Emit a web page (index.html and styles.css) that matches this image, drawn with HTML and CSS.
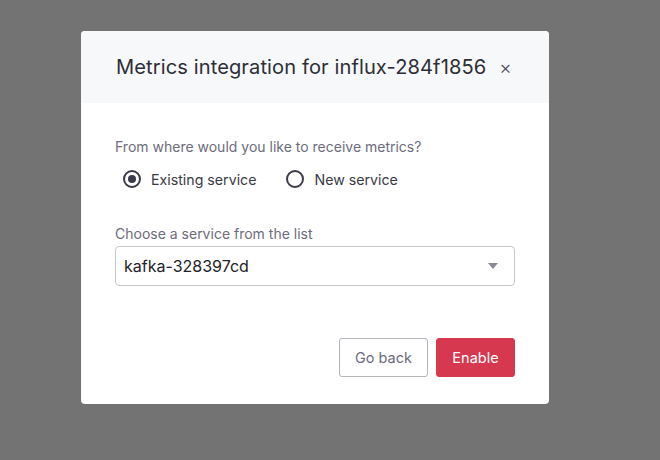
FILE: index.html
```html
<!DOCTYPE html>
<html lang="en">
<head>
<meta charset="utf-8">
<title>Metrics integration</title>
<link rel="stylesheet" href="styles.css">
</head>
<body>
<div class="modal">
  <div class="modal-header">
    <h2 class="modal-title">Metrics integration for influx-284f1856</h2>
    <span class="close">×</span>
  </div>
  <div class="modal-body">
    <p class="question">From where would you like to receive metrics?</p>
    <div class="radios">
      <label class="radio"><span class="radio-circle checked"></span>Existing service</label>
      <label class="radio"><span class="radio-circle"></span>New service</label>
    </div>
    <p class="field-label">Choose a service from the list</p>
    <div class="select">
      <span class="select-value">kafka-328397cd</span>
      <span class="caret"></span>
    </div>
    <div class="footer">
      <button class="btn btn-secondary">Go back</button>
      <button class="btn btn-primary">Enable</button>
    </div>
  </div>
</div>
</body>
</html>
```
FILE: styles.css
```css
* { box-sizing: border-box; }
html, body { margin: 0; padding: 0; }
body {
  background: #737373;
  font-family: Inter, "Noto Sans", sans-serif;
  width: 660px;
  height: 460px;
  overflow: hidden;
  padding: 31px 0 0 81px;
}
.modal {
  width: 468px;
  background: #ffffff;
  border-radius: 4px;
  overflow: hidden;
}
.modal-header {
  height: 72px;
  background: #f7f8fa;
  display: flex;
  align-items: center;
  padding: 0 30px 0 35px;
}
.modal-title {
  margin: 0;
  font-size: 20.1px;
  font-weight: 400;
  color: #2e2e36;
  letter-spacing: 0.1px;
  white-space: nowrap;
}
.close {
  margin-left: 13px;
  font-size: 19px;
  font-weight: 300;
  color: #4a4a55;
  line-height: 1;
}
.modal-body {
  padding: 34px 34px 27px 34px;
}
.question {
  margin: 0;
  font-size: 14px;
  line-height: 20px;
  color: #6c6c7c;
}
.radios {
  margin-top: 10px;
  display: flex;
  gap: 30px;
  padding-left: 8px;
  height: 24px;
  align-items: center;
}
.radio {
  display: flex;
  align-items: center;
  font-size: 14.2px;
  color: #3a3a45;
}
.radio-circle {
  width: 18px;
  height: 18px;
  border: 2px solid #3a3a48;
  border-radius: 50%;
  margin-right: 10px;
  display: flex;
  align-items: center;
  justify-content: center;
}
.radio-circle.checked::after {
  content: "";
  width: 8px;
  height: 8px;
  border-radius: 50%;
  background: #3a3a48;
}
.field-label {
  margin: 33px 0 0 0;
  font-size: 14px;
  line-height: 20px;
  color: #6c6c7c;
}
.select {
  margin-top: 2px;
  height: 40px;
  border: 1px solid #c6c6cc;
  border-radius: 4px;
  display: flex;
  align-items: center;
  padding: 0 16px 0 8px;
  justify-content: space-between;
}
.select-value {
  font-size: 16px;
  color: #222228;
}
.caret {
  width: 0;
  height: 0;
  border-left: 5px solid transparent;
  border-right: 5px solid transparent;
  border-top: 6px solid #8a8a94;
}
.footer {
  margin-top: 52px;
  display: flex;
  justify-content: flex-end;
  gap: 8px;
}
.btn {
  font-family: Inter, "Noto Sans", sans-serif;
  font-size: 14.5px;
  height: 39px;
  border-radius: 3px;
  padding: 0;
  white-space: nowrap;
  cursor: pointer;
}
.btn-secondary {
  background: #fff;
  border: 1px solid #b4b4bc;
  color: #6c6c7c;
  width: 89px;
}
.btn-primary {
  background: #d6394f;
  border: 1px solid #d6394f;
  color: #ffffff;
  width: 79px;
}
```
